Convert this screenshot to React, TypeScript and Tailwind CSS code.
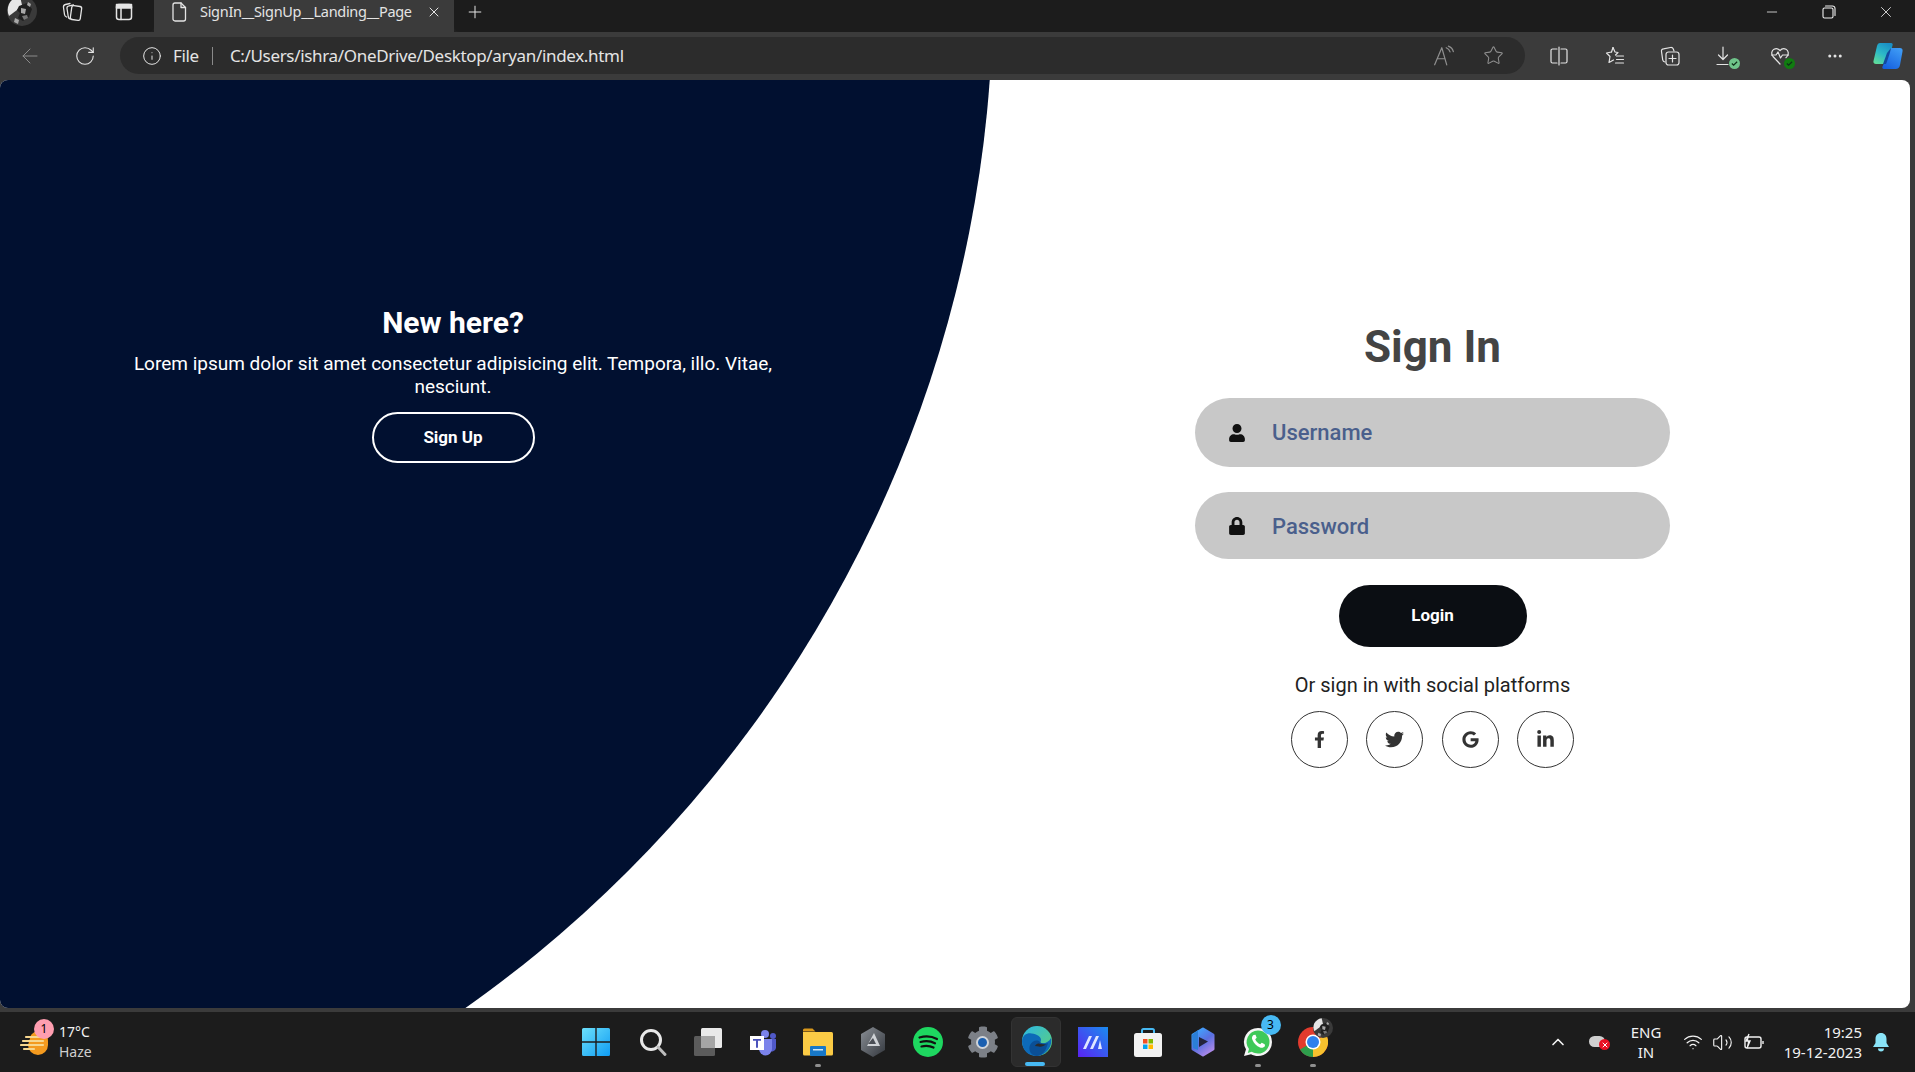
import {
  ArrowLeft,
  ChevronUp,
  Info,
  Minus,
  MoreHorizontal,
  Plus,
  RotateCw,
  Star,
  Volume2,
  Wifi,
  X,
} from 'lucide-react';
import { FaFacebookF, FaGoogle, FaLinkedinIn, FaLock, FaTwitter, FaUser, FaCog } from 'react-icons/fa';

const stroke = { fill: 'none', stroke: 'currentColor', strokeWidth: 1.3, strokeLinecap: 'round', strokeLinejoin: 'round' } as const;

function Avatar({ size = 30 }: { size?: number }) {
  return (
    <svg width={size} height={size} viewBox="0 0 30 30">
      <circle cx="15" cy="15" r="15" fill="#3a3a3a" />
      <path d="M2 8A15 15 0 0 1 13 .200L15 9l-5 5-8 6A15 15 0 0 1 2 8z" fill="#e6e6e6" />
      <path d="M12 10l8-3 5 6-3 8-6 4-5-3 2-5-3-3z" fill="#1f1f1f" />
      <path d="M14 12l5 1-1 5-4-1zM8 22l4 2-1 4-4-2zM21 6l3 2-1 3-3-2z" fill="#a8a8a8" />
      <path d="M15 20l5-1 1 3-4 2z" fill="#777" />
    </svg>
  );
}

function TabBar() {
  return (
    <div className="flex h-8 shrink-0 bg-[#202020] text-[#e4e4e4]">
      <div className="flex h-8 w-[154px] items-center overflow-hidden rounded-br-md bg-[#1c1c1c] pb-[8px]">
        <div className="ml-[7px] -mt-[2px] shrink-0">
          <Avatar />
        </div>
        <svg className="ml-[24px] shrink-0" width="22" height="22" viewBox="0 0 22 22" {...stroke}>
          <rect x="10" y="5" width="10" height="14" rx="2" transform="rotate(8 15 12)" />
          <path d="M9 18c-1-.5-1.500-1-1.700-2L6 7.500C5.800 6 6.500 5 8 4.800l4.500-.8" />
          <path d="M5.500 16c-1-.5-1.800-1-2-2.500L2.500 6.500C2.300 5 3 3.800 4.500 3.500L9 2.500" />
        </svg>
        <svg className="ml-[32px] shrink-0" width="18" height="18" viewBox="0 0 18 18" {...stroke} strokeWidth={1.5}>
          <rect x="1.500" y="1.500" width="15" height="15" rx="2.500" />
          <rect x="1.500" y="1.500" width="15" height="3.500" fill="currentColor" />
          <path d="M6 5v11.500" />
        </svg>
      </div>
      <div className="flex h-8 w-[300px] items-center bg-[#3b3b3b] pb-[8px]">
        <svg className="ml-[17px] shrink-0" width="16" height="20" viewBox="0 0 16 20" {...stroke}>
          <path d="M2 3a2 2 0 0 1 2-2h6l4.500 4.500V17a2 2 0 0 1-2 2H4a2 2 0 0 1-2-2z" />
          <path d="M10 1v4.500h4.500" />
        </svg>
        <span className="ml-[13px] w-[225px] truncate font-['Noto_Sans',sans-serif] text-[14.500px] tracking-[-0.3px]">SignIn__SignUp__Landing__Page</span>
        <X className="ml-[1px]" size={16} strokeWidth={1.5} />
      </div>
      <div className="flex h-8 flex-1 items-center rounded-bl-md bg-[#1c1c1c] pb-[8px]">
        <Plus className="ml-[11px]" size={20} strokeWidth={1.2} />
        <div className="ml-auto flex items-center text-[#f0f0f0]">
          <Minus size={16} strokeWidth={1.2} />
          <svg className="ml-[42px]" width="14" height="14" viewBox="0 0 14 14" {...stroke} strokeWidth={1.1}>
            <rect x="1" y="3" width="10" height="10" rx="1.500" />
            <path d="M3.500 1h7a2.500 2.500 0 0 1 2.500 2.500v7" />
          </svg>
          <X className="ml-[41px] mr-[20px]" size={18} strokeWidth={1.1} />
        </div>
      </div>
    </div>
  );
}

function CheckDot({ color }: { color: string }) {
  return (
    <span className={`absolute -bottom-[3px] -right-[5px] flex h-[11px] w-[11px] items-center justify-center rounded-full ${color}`}>
      <svg width="7" height="7" viewBox="0 0 8 8" fill="none" stroke="#10301a" strokeWidth="1.400">
        <path d="M1 4l2 2 4-4" />
      </svg>
    </span>
  );
}

function Toolbar() {
  return (
    <div className="flex h-12 shrink-0 items-center bg-[#3b3b3b] pb-[1px] text-[#e4e4e4]">
      <ArrowLeft className="ml-[18px] text-[#8c8c8c]" size={24} strokeWidth={1} />
      <RotateCw className="ml-[32px]" size={22} strokeWidth={1.2} />
      <div className="ml-[24px] flex h-[37px] w-[1405px] items-center rounded-full bg-[#2c2c2c]">
        <Info className="ml-[22px]" size={20} strokeWidth={1.2} />
        <span className="ml-[11px] font-['Noto_Sans',sans-serif] text-[17px] tracking-[-0.33px]">File</span>
        <div className="ml-[13px] h-[18px] w-px bg-[#8a8a8a]" />
        <span className="ml-[17px] font-['Noto_Sans',sans-serif] text-[17px] tracking-[-0.33px]">C:/Users/ishra/OneDrive/Desktop/aryan/index.html</span>
        <div className="ml-auto flex items-center text-[#8f8f8f]">
          <svg width="22" height="22" viewBox="0 0 20 20" {...stroke} strokeWidth={1.1}>
            <path d="M1.500 18L8 2.500 12.500 18M4 12.500h7" />
            <path d="M12 2.500c2 .8 3 2 3.500 3.800M14 1c2.500 1 4 2.800 4.500 5" />
          </svg>
          <Star className="ml-[28px] mr-[21px]" size={21} strokeWidth={1.2} />
        </div>
      </div>
      <div className="ml-[24px] flex items-center">
        <svg width="20" height="20" viewBox="0 0 20 20" {...stroke} strokeWidth={1.2}>
          <path d="M8 3H3.500A1.500 1.500 0 0 0 2 4.500v11A1.500 1.500 0 0 0 3.500 17H8M12 3h4.500A1.500 1.500 0 0 1 18 4.500v11a1.500 1.500 0 0 1-1.500 1.500H12M10 1v18" />
        </svg>
        <svg className="ml-[36px]" width="20" height="20" viewBox="0 0 20 20" {...stroke} strokeWidth={1.2}>
          <path d="M8 1.500l2 4.500 3 .5-2.500 2.500M6.500 6L1.500 7l3.500 3.500-1 6 4.500-2.500" />
          <path d="M8 1.500L6.500 6M11.500 10h7M11.500 13.500h7M10.500 17h8" />
        </svg>
        <svg className="ml-[35px]" width="20" height="22" viewBox="0 0 20 22" {...stroke} strokeWidth={1.2}>
          <path d="M5 17c-1.500-.3-2-1-2.300-2.200L1.500 6.500C1.300 5 2 4 3.500 3.800l7-1.300c1.500-.2 2.300.3 2.800 1.500L14 6" />
          <rect x="6" y="7" width="13" height="13" rx="2.500" />
          <path d="M12.500 10v7M9 13.500h7" />
        </svg>
        <div className="relative ml-[35px] h-5 w-5">
          <svg width="20" height="20" viewBox="0 0 20 20" {...stroke} strokeWidth={1.2}>
            <path d="M8 1v12M3.500 9L8 13.500 12.500 9M2 18.500h11" />
          </svg>
          <CheckDot color="bg-[#6fc48a]" />
        </div>
        <div className="relative ml-[35px] h-5 w-5">
          <svg width="20" height="20" viewBox="0 0 20 20" {...stroke} strokeWidth={1.2}>
            <path d="M10 18l-7-7.500C1 8 1.500 4.500 4 3.200c2-1 4.500-.5 6 1.500 1.500-2 4-2.500 6-1.500 2.500 1.300 3 4.800 1 7.300l-1 1.200" />
            <path d="M1.500 9H6l2-3 2.500 6 2-3h6" />
          </svg>
          <CheckDot color="bg-[#107c10]" />
        </div>
        <MoreHorizontal className="ml-[36px]" size={18} strokeWidth={2} />
        <svg className="ml-[28px]" width="32" height="30" viewBox="0 0 32 30">
          <defs>
            <linearGradient id="cpA" x1="0.7" y1="0" x2="0.2" y2="1">
              <stop offset="0" stopColor="#1a8fc4" />
              <stop offset="0.5" stopColor="#2cb8c8" />
              <stop offset="1" stopColor="#5fdc9a" />
            </linearGradient>
            <linearGradient id="cpB" x1="0.8" y1="0" x2="0.2" y2="1">
              <stop offset="0" stopColor="#3f9cf5" />
              <stop offset="1" stopColor="#1560e0" />
            </linearGradient>
          </defs>
          <path d="M8 2h11c1.500 0 2 1 1.500 2.500l-5 18.500H4c-2 0-3-1.500-2.500-3L5 5c.5-2 1.500-3 3-3z" fill="url(#cpA)" />
          <path d="M19 7h9c2 0 3 1.500 2.500 3.500L28 24c-.5 2.500-2 4-4.500 4H12c-1.500 0-2-1-1.500-2.500z" fill="url(#cpB)" />
          <path d="M15 12l4-5c-1 5-3 11-5 16h-3z" fill="#124a9e" />
        </svg>
      </div>
    </div>
  );
}

function SocialIcon({ children }: { children: React.ReactNode }) {
  return (
    <div className="flex h-[57px] w-[57px] items-center justify-center rounded-full border border-[#333] text-[#333] text-[20px]">
      {children}
    </div>
  );
}

function Field({ icon, label, className }: { icon: React.ReactNode; label: string; className: string }) {
  return (
    <div className={`flex w-[475px] items-center rounded-full bg-[#c8c8c8] ${className}`}>
      <div className="ml-[33px] flex w-[18px] justify-center text-[#111]">{icon}</div>
      <span className="ml-[26px] text-[22px] font-medium text-[#4a5f8c]">{label}</span>
    </div>
  );
}

function Page() {
  return (
    <div className="relative mr-[5px] flex h-[928px] shrink-0 overflow-hidden rounded-lg bg-white font-['Roboto',sans-serif]">
      <div className="absolute -left-[1499px] -top-[1336px] h-[2492px] w-[2492px] rounded-full bg-[#011030]" />
      <div className="relative flex w-[906px] shrink-0 flex-col items-center pt-[221px] text-white">
        <h3 className="text-[30px] leading-[44px] font-bold">New here?</h3>
        <p className="mt-[7px] w-[660px] text-center text-[19px] leading-[23px]">
          Lorem ipsum dolor sit amet consectetur adipisicing elit. Tempora, illo. Vitae, nesciunt.
        </p>
        <button className="mt-[14px] h-[51px] w-[163px] rounded-full border-[2.5px] border-white text-[17px] font-bold">
          Sign Up
        </button>
      </div>
      <div className="relative ml-[49px] flex w-[955px] shrink-0 flex-col items-center pt-[241px]">
        <h2 className="text-[44px] leading-[52px] font-bold text-[#444]">Sign In</h2>
        <Field className="mt-[25px] h-[69px]" icon={<FaUser size={18} />} label="Username" />
        <Field className="mt-[25px] h-[67px] pt-[1px]" icon={<FaLock size={18} />} label="Password" />
        <button className="mt-[26px] h-[62px] w-[188px] rounded-full bg-[#0b0e13] text-[17px] font-bold text-white">
          Login
        </button>
        <p className="mt-[25px] text-[20px] leading-[26px] text-[#222]">Or sign in with social platforms</p>
        <div className="mt-[13px] flex gap-[18.500px]">
          <SocialIcon><FaFacebookF size={17} /></SocialIcon>
          <SocialIcon><FaTwitter size={19} /></SocialIcon>
          <SocialIcon><FaGoogle size={17} /></SocialIcon>
          <SocialIcon><FaLinkedinIn size={19} /></SocialIcon>
        </div>
      </div>
    </div>
  );
}

function Slot({ children, dot }: { children: React.ReactNode; dot?: boolean }) {
  return (
    <div className="relative flex h-[60px] w-[55px] shrink-0 items-center justify-center">
      {children}
      {dot && <span className="absolute bottom-[5px] h-[3px] w-[6px] rounded-full bg-[#8f8f8f]" />}
    </div>
  );
}

function TaskIcons() {
  return (
    <div className="flex w-[772px] shrink-0 items-center">
      <Slot>
        <svg className="-ml-[4px]" width="30" height="30" viewBox="0 0 30 30">
          <defs>
            <linearGradient id="win" x1="0" y1="0" x2="1" y2="1">
              <stop offset="0" stopColor="#6ce0fb" />
              <stop offset="1" stopColor="#0f9cf3" />
            </linearGradient>
          </defs>
          <path d="M1 2.500A1.500 1.500 0 0 1 2.500 1h11.800v13.300H1zM15.700 1h11.800A1.500 1.500 0 0 1 29 2.500v11.800H15.700zM1 15.700h13.300V29H2.500A1.500 1.500 0 0 1 1 27.500zM15.700 15.700H29v11.800a1.500 1.500 0 0 1-1.500 1.500H15.700z" fill="url(#win)" />
        </svg>
      </Slot>
      <Slot>
        <svg width="30" height="30" viewBox="0 0 30 30" fill="none" stroke="#e8e8e8" strokeWidth="3" strokeLinecap="round">
          <circle cx="13" cy="13" r="9.500" />
          <path d="M20 20l7 7.500" stroke="#bdbdbd" />
        </svg>
      </Slot>
      <Slot>
        <svg width="30" height="30" viewBox="0 0 30 30">
          <rect x="8" y="1" width="21" height="20" rx="1.500" fill="#e9e9e9" />
          <rect x="1" y="9" width="21" height="20" rx="1.500" fill="#5b5b5b" />
          <rect x="8" y="9" width="14" height="12" fill="#a5a5a5" />
        </svg>
      </Slot>
      <Slot>
        <svg width="28" height="28" viewBox="0 0 28 28">
          <circle cx="16" cy="6" r="4" fill="#7b83eb" />
          <circle cx="24" cy="8" r="3" fill="#5059c9" />
          <path d="M20 11h7v9a4 4 0 0 1-7 2z" fill="#5059c9" />
          <path d="M10 11h13v10a6.500 6.500 0 0 1-13 0z" fill="#7b83eb" />
          <rect x="1" y="8" width="14" height="14" fill="#fff" />
          <path d="M4 11h8v1.800H9v7H7v-7H4z" fill="#4b53bc" />
        </svg>
      </Slot>
      <Slot dot>
        <svg width="30" height="30" viewBox="0 0 30 30">
          <path d="M0 3a1.500 1.500 0 0 1 1.500-1.500h8l3 3h-12.500z" fill="#d9981b" />
          <path d="M0 5h28.500A1.500 1.500 0 0 1 30 6.500V27a1.500 1.500 0 0 1-1.500 1.500h-27A1.500 1.500 0 0 1 0 27z" fill="#fbcb45" />
          <rect x="7" y="19" width="16" height="10" rx="1" fill="#1878c8" />
          <rect x="10" y="22" width="10" height="1.500" fill="#cfe6f7" />
        </svg>
      </Slot>
      <Slot>
        <svg width="26" height="30" viewBox="0 0 26 30">
          <defs>
            <linearGradient id="hx" x1="0" y1="0" x2="1" y2="1">
              <stop offset="0" stopColor="#8a8f96" />
              <stop offset="1" stopColor="#33373d" />
            </linearGradient>
          </defs>
          <path d="M13 0l12 7v16l-12 7-12-7V7z" fill="url(#hx)" />
          <path d="M14 6l6 13-13 0z" fill="#cfd2d6" />
          <path d="M13 11l3 6H8z" fill="#4a4e55" />
        </svg>
      </Slot>
      <Slot>
        <svg width="30" height="30" viewBox="0 0 30 30">
          <circle cx="15" cy="15" r="15" fill="#1ed760" />
          <path d="M6.500 10.500c6-1.800 12.500-1.200 17.500 1.500M7.500 15c5-1.400 10.500-.9 14.500 1.300M8.500 19.500c4-1 8.500-.7 12 1.100" fill="none" stroke="#111" strokeWidth="2.200" strokeLinecap="round" />
        </svg>
      </Slot>
      <Slot>
        <div className="relative flex items-center justify-center text-[#7c8087]">
          <FaCog size={32} />
          <span className="absolute h-[13px] w-[13px] rounded-full border-2 border-[#cfd4da] bg-[#1a5fb0]" />
        </div>
      </Slot>
      <Slot>
        <div className="absolute left-[1px] top-[5px] h-[50px] w-[50px] rounded-md border border-[#333] bg-[#2b2b2b]" />
        <svg className="relative -mt-[3px] -ml-[2px]" width="30" height="30" viewBox="0 0 30 30">
          <defs>
            <linearGradient id="edA" x1="0" y1="0" x2="1" y2="1">
              <stop offset="0" stopColor="#2ab7e8" />
              <stop offset="1" stopColor="#62d26f" />
            </linearGradient>
          </defs>
          <circle cx="15" cy="15" r="15" fill="url(#edA)" />
          <path d="M0 15C1 6 9 6 15 9c4 2 5 5 3 8 5 1 9-1 11-5 2 8-5 18-14 18C6 30 0 24 0 15z" fill="#0d6ab8" />
          <path d="M15 30C9 30 6 24 8 19c2-4 7-6 10-3 2 2 5 2 8 1-2 8-6 13-11 13z" fill="#0a4f96" />
          <path d="M13 20c1-2 3-3 5-2l6 .5c-2 1-5 3-7 2z" fill="#2b2b2b" />
        </svg>
        <span className="absolute bottom-[6px] left-[15px] h-[4px] w-[20px] rounded-full bg-[#47b9f3]" />
      </Slot>
      <Slot>
        <svg width="30" height="30" viewBox="0 0 30 30">
          <defs>
            <linearGradient id="mz" x1="0" y1="1" x2="1" y2="0">
              <stop offset="0" stopColor="#5a22f0" />
              <stop offset="1" stopColor="#1a8cf0" />
            </linearGradient>
          </defs>
          <rect width="30" height="30" fill="url(#mz)" />
          <path d="M5 22l6-13h3l-6 13zM12 22l6-13h3l-6 13zM20 22l2-9 2 9z" fill="#dfe6ff" />
        </svg>
      </Slot>
      <Slot>
        <svg width="30" height="30" viewBox="0 0 30 30">
          <path d="M9 6V3.500A1.500 1.500 0 0 1 10.500 2h9A1.500 1.500 0 0 1 21 3.500V6" fill="none" stroke="#47b9f3" strokeWidth="2" />
          <rect x="1" y="6" width="28" height="24" rx="2.500" fill="#f2f2f2" />
          <rect x="10" y="12" width="4.500" height="4.500" fill="#f25022" />
          <rect x="15.500" y="12" width="4.500" height="4.500" fill="#7fba00" />
          <rect x="10" y="17.500" width="4.500" height="4.500" fill="#00a4ef" />
          <rect x="15.500" y="17.500" width="4.500" height="4.500" fill="#ffb900" />
        </svg>
      </Slot>
      <Slot>
        <svg width="26" height="30" viewBox="0 0 26 30">
          <defs>
            <linearGradient id="cpT" x1="0.2" y1="0" x2="0.8" y2="1">
              <stop offset="0" stopColor="#3fa6ff" />
              <stop offset="0.5" stopColor="#5a6fe0" />
              <stop offset="1" stopColor="#b48be8" />
            </linearGradient>
          </defs>
          <path d="M13 2l10 6v14l-10 6-10-6V8z" fill="url(#cpT)" stroke="url(#cpT)" strokeWidth="3" strokeLinejoin="round" />
          <path d="M2 8l6-5v20l-5-2z" fill="#2b7fd8" />
          <path d="M9 10l9 4.500L9 20z" fill="#23233a" />
        </svg>
      </Slot>
      <Slot dot>
        <div className="relative">
          <svg width="30" height="30" viewBox="0 0 30 30">
            <path d="M15 1a14 14 0 0 1 0 28c-2.500 0-5-.6-7-1.800L1 29l2-6.800A14 14 0 0 1 15 1z" fill="#f4f4f4" />
            <path d="M15 3.500a11.500 11.500 0 0 1 0 23c-2.200 0-4.300-.6-6.200-1.700l-4 1.100 1.200-3.900A11.500 11.500 0 0 1 15 3.500z" fill="#3ec958" />
            <path d="M10.500 8c-1.500 1-2 3-1 5 1.500 3.500 4 6 7.500 7.500 2 .8 4 0 5-1.500l-.3-1.800-3-1.500-1.500 1.500c-2.200-.8-4-2.700-5-5l1.500-1.500-1.200-3z" fill="#fff" />
          </svg>
          <span className="absolute -right-[8px] -top-[12px] flex h-[20px] w-[20px] items-center justify-center rounded-full bg-[#47b9f3] font-['Noto_Sans',sans-serif] text-[12px] text-black">3</span>
        </div>
      </Slot>
      <Slot dot>
        <div className="relative">
          <svg width="30" height="30" viewBox="0 0 30 30">
            <circle cx="15" cy="15" r="15" fill="#e23b2e" />
            <path d="M15 15L2 22.500A15 15 0 0 0 15 30z" fill="#2e9e4c" />
            <path d="M15 15v15A15 15 0 0 0 28 7.500z" fill="#f7c12e" />
            <path d="M15 8h13v-.500L15 15z" fill="#e23b2e" />
            <circle cx="15" cy="15" r="7.500" fill="#fff" />
            <circle cx="15" cy="15" r="6" fill="#2f80ed" />
          </svg>
          <span className="absolute -right-[5px] -top-[9px]">
            <Avatar size={20} />
          </span>
        </div>
      </Slot>
    </div>
  );
}

function Taskbar() {
  return (
    <div className="mt-1 flex h-[60px] shrink-0 bg-[#1c1c1c] font-['Noto_Sans',sans-serif] text-[#f2f2f2]">
      <div className="flex w-[570px] shrink-0 items-center">
        <div className="relative ml-[20px] h-[30px] w-[30px]">
          <svg width="30" height="30" viewBox="0 0 30 30">
            <path d="M11 8a9.500 9.500 0 0 1 17 6v4a10 10 0 0 1-20 0z" fill="#f39a1f" />
            <path d="M6 10h15M3 14h20M1 18h22M4 22h10" stroke="#f6d68e" strokeWidth="2.200" strokeLinecap="round" />
          </svg>
          <span className="absolute -right-[4px] -top-[8px] flex h-[20px] w-[20px] items-center justify-center rounded-full bg-[#ff9eb0] text-[12px] text-black">1</span>
        </div>
        <div className="ml-[9px] flex flex-col text-[14px] leading-[20px]">
          <span>17°C</span>
          <span className="text-[#cfcfcf]">Haze</span>
        </div>
      </div>
      <TaskIcons />
      <div className="flex flex-1 items-center">
        <ChevronUp className="ml-[206px]" size={20} strokeWidth={2} />
        <div className="relative ml-[20px] h-5 w-5">
          <span className="absolute left-[1px] top-[4px] h-[11px] w-[16px] rounded-full bg-[#cfcfcf]" />
          <span className="absolute -right-[2px] top-[7px] flex h-[11px] w-[11px] items-center justify-center rounded-full bg-[#e81123]">
            <X size={8} strokeWidth={3} className="text-white" />
          </span>
        </div>
        <div className="ml-[17px] flex w-[42px] flex-col items-center text-[15px] leading-[20px]">
          <span>ENG</span>
          <span>IN</span>
        </div>
        <Wifi className="ml-[16px]" size={20} strokeWidth={1.500} />
        <Volume2 className="ml-[9px]" size={21} strokeWidth={1.300} />
        <svg className="ml-[10px]" width="22" height="18" viewBox="0 0 22 18" fill="none" stroke="currentColor" strokeWidth="1.400">
          <rect x="2" y="4" width="16" height="11" rx="2" />
          <path d="M20 8v3" />
          <path d="M6 1L3 8h4l-3 7" fill="#f2f2f2" />
        </svg>
        <div className="ml-[5px] flex w-[92px] flex-col items-end text-[15px] leading-[20px]">
          <span>19:25</span>
          <span>19-12-2023</span>
        </div>
        <svg className="ml-[10px]" width="18" height="20" viewBox="0 0 18 20" fill="#8ae4f8">
          <path d="M9 1c3.500 0 5.500 2.500 5.500 6v4l2.500 4H1l2.500-4V7C3.500 3.500 5.500 1 9 1z" />
          <path d="M6 16.500h6a3 3 0 0 1-6 0z" />
        </svg>
      </div>
    </div>
  );
}

export default function App() {
  return (
    <div className="flex h-[1072px] w-[1915px] flex-col overflow-hidden bg-[#3b3b3b]">
      <TabBar />
      <Toolbar />
      <Page />
      <Taskbar />
    </div>
  );
}
